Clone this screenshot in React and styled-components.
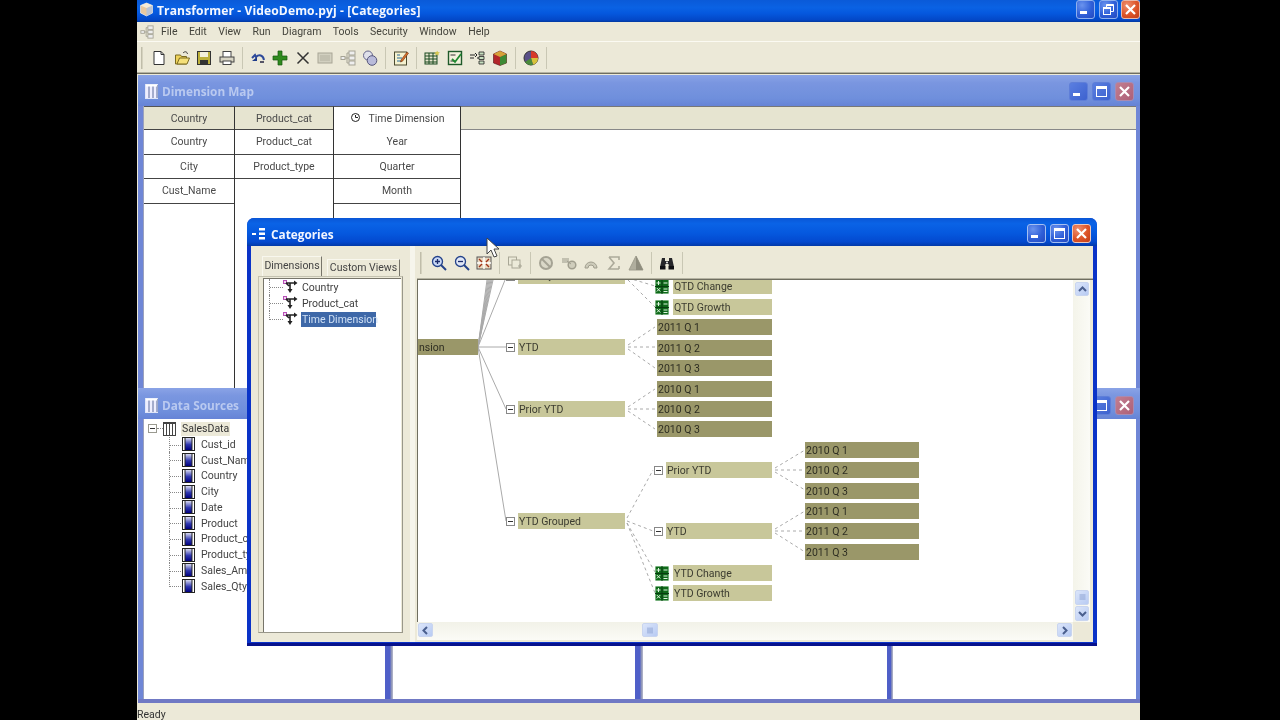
import React from "react";
import styled, { createGlobalStyle } from "styled-components";

const Global = createGlobalStyle`
  html, body { margin: 0; padding: 0; background: #000; width: 1280px; height: 720px; overflow: hidden; }
  #root { width: 1280px; height: 720px; }
  * { box-sizing: border-box; }
`;

const UI = `Roboto, "Liberation Sans", Arial, sans-serif`;
const TITLE = `"Open Sans", "Noto Sans", sans-serif`;

const Stage = styled.div`
  position: relative; width: 1280px; height: 720px; background: #000; padding-left: 137px;
  font-family: ${UI}; font-size: 10.5px; color: #333; filter: blur(0.35px);
`;
const AppWindow = styled.div`
  width: 1003px; height: 720px; display: flex; flex-direction: column; background: #ece9d8; overflow: hidden;
`;
const MainTitle = styled.div`
  height: 22px; flex: none; display: flex; align-items: center; padding: 0 0 3px 2px; gap: 3px;
  background: linear-gradient(#0a5ad8 0, #0a62e4 35%, #0558de 60%, #0348c8 90%, #02389e 100%);
`;
const MainTitleText = styled.span`
  flex: 1; padding-top: 2px; font: 700 12.1px ${TITLE}; color: #f4f7ff; letter-spacing: 0.1px;
`;
const WinButtons = styled.div`
  display: flex; flex: none; gap: ${p => p.$gap ?? 3}px; height: 19px;
`;
const btnBg = {
  blue: "radial-gradient(circle at 30% 25%, #6a93ee, #2f5fd8 55%, #2449c0)",
  red: "radial-gradient(circle at 30% 25%, #ee9070, #dd5428 55%, #c03c18)",
  dim: "linear-gradient(135deg, #5a7ee0, #3d62cf)",
  dimRed: "linear-gradient(135deg, #c27e90, #ad6078)",
};
const WinBtn = styled.div`
  width: 19px; height: 19px; flex: none;
  border-radius: 3px; display: flex; align-items: center; justify-content: center;
  border: 1px solid ${p => p.$line ?? "#dbe6fb"};
  background: ${p => btnBg[p.$kind]};
`;
const Glyph = ({ name }) => (
  <svg width="13" height="13" viewBox="0 0 13 13" fill="none" stroke="#fff">
    {name === "min" && <rect x="1.5" y="8.5" width="6" height="2" fill="#fff" />}
    {name === "max" && <><rect x="1.5" y="1.5" width="10" height="10" strokeWidth="1" /><rect x="1.5" y="1.5" width="10" height="2" fill="#fff" /></>}
    {name === "restore" && <><rect x="1.5" y="4.5" width="7" height="7" /><path d="M4.5 4V1.5h7v7H9" /><path d="M1.5 5.2h7M4.5 2.2h7" strokeWidth="1.4" /></>}
    {name === "close" && <path d="M2 2l9 9M11 2l-9 9" strokeWidth="2.2" />}
  </svg>
);

const MenuBar = styled.div`
  height: 20px; flex: none; display: flex; align-items: center; padding-left: 3px; gap: 11.5px;
  border-bottom: 1px solid #fbfaf2; color: #44443c;
`;
const MenuIcon = styled.svg` flex: none; margin-right: -4.5px; `;
const Tool = styled.div`
  height: 32px; flex: none; display: flex; align-items: center; padding: 0 0 0 4px;
  border-bottom: 1px solid #6f6e60; background: #ece9d8; box-shadow: inset 0 -1px 0 #b5b3a2;
`;
const Grip = styled.span`
  width: 2px; height: 22px; flex: none; margin-right: ${p => p.$after}px;
  background: #d5d2bf; border-left: 1px solid #c0bdaa;
`;
const ToolIcon = styled.span`
  width: 22.5px; height: 22px; flex: none; display: flex; align-items: center; justify-content: center;
`;
const ToolSep = styled.span`
  width: 8.5px; height: 22px; flex: none; display: flex; justify-content: center;
  &::before { content: ""; width: 1px; height: 100%; background: #c9c7b4; }
`;

const I = ({ children, s = 16, o }) => <svg width={s} height={s} viewBox="0 0 16 16" opacity={o}>{children}</svg>;

const treeGlyph = <><path d="M1 8h4M5 8h2M7 3v10M7 3h2M7 8h2M7 13h2" stroke="#a5a395" fill="none" /><rect x="1" y="6.5" width="4" height="3" fill="#eee" stroke="#a5a395" /><rect x="9" y="1" width="6" height="4" fill="#eee" stroke="#a5a395" /><rect x="9" y="6" width="6" height="4" fill="#eee" stroke="#a5a395" /><rect x="9" y="11" width="6" height="4" fill="#eee" stroke="#a5a395" /></>;

const icons = {
  newDoc: <I><path d="M3 1.5h7l3 3v10H3z" fill="#fff" stroke="#333" /><path d="M10 1.5v3h3" fill="none" stroke="#333" /></I>,
  open: <I><path d="M1.5 5h5l1 1.5h5v7.5h-11z" fill="#eed25a" stroke="#7a6a20" /><path d="M3 14l2.5-6h10l-2.5 6z" fill="#f5e07a" stroke="#7a6a20" /><path d="M9 3c2-2 4-1.5 4.5 1" fill="none" stroke="#333" /></I>,
  save: <I><rect x="1.5" y="1.5" width="13" height="13" fill="#bcb03a" stroke="#333" /><rect x="4" y="2" width="8" height="5" fill="#f3f0da" /><rect x="4" y="10" width="8" height="4.5" fill="#333" /></I>,
  print: <I><rect x="4" y="1.5" width="8" height="6" fill="#fff" stroke="#444" /><rect x="1" y="7" width="14" height="5" fill="#d8d5c4" stroke="#444" /><rect x="4" y="11" width="8" height="3.5" fill="#fff" stroke="#444" /></I>,
  undo: <I><path d="M2 8l3-3 1 2c3-3 7-2 8 3" fill="none" stroke="#2e4a9a" strokeWidth="2" /><path d="M2 11h5V7z" fill="#1d3a8a" /><path d="M10 11h4v2h-4z" fill="#556" /></I>,
  plus: <I><path d="M6 1h4v5h5v4h-5v5H6v-5H1V6h5z" fill="#2f8a1e" stroke="#14560e" strokeWidth=".7" /></I>,
  cross: <I><path d="M2.5 2.5l11 11M13.5 2.5l-11 11" stroke="#333" strokeWidth="1.5" /></I>,
  greyBox: <I><rect x="1" y="3" width="14" height="10" fill="#d2d0c0" stroke="#a8a696" /><path d="M3 6h10M3 8h10M3 10h10" stroke="#b2b0a0" /></I>,
  tree: <I>{treeGlyph}</I>,
  circles: <I><circle cx="6" cy="5.5" r="4.5" fill="#dfe0ea" stroke="#65658a" /><circle cx="10" cy="10.5" r="4.8" fill="#b9bbda" stroke="#55557a" /></I>,
  edit: <I><rect x="1.5" y="2" width="12" height="13" fill="#f5f2d0" stroke="#4a4a30" /><path d="M4 5h3M4 8h5M4 11h5" stroke="#2a6a9a" /><path d="M8 10l6-8 1.5 1.2-6 8L7.5 12z" fill="#d8702a" stroke="#6a3010" strokeWidth=".6" /></I>,
  grid: <I><rect x="1" y="3" width="12" height="11" fill="#e8e6d0" stroke="#1a4a20" /><path d="M1 6h12M1 9h12M1 12h12M5 3v11M9 3v11" stroke="#1a4a20" /><path d="M11 1l1 1.5 2 .5-1.5 1 .2 2-1.7-1-1.7 1 .2-2L8.5 3l2-.5z" fill="#d6c850" transform="translate(2 -.5)" /></I>,
  check: <I><rect x="1.5" y="1.5" width="13" height="13" fill="#f3f1de" stroke="#1e5a2a" strokeWidth="1.4" /><path d="M3.5 5h5M3.5 11h5" stroke="#333" /><path d="M5 9l3 3 6-8" fill="none" stroke="#1f8a30" strokeWidth="1.8" /></I>,
  tree2: <I><path d="M1 5h5M1 8h4M6 3l2 2-2 2M8 8h2" stroke="#222" fill="none" /><path d="M10 2h5v3h-5zM10 6.5h5v3h-5zM10 11h5v3h-5z" fill="#c8e0c0" stroke="#222" strokeWidth=".8" /></I>,
  cube: <I><path d="M8 1l6.5 3v9L8 15.5 1.5 13V4z" fill="#b3262a" stroke="#501015" strokeWidth=".6" /><path d="M8 7v8.5L14.5 13V4z" fill="#3d8a35" /><path d="M8 1l6.5 3L8 7 1.5 4z" fill="#d7a33a" /></I>,
  pie: <I><circle cx="8" cy="8" r="7" fill="#5a5088" stroke="#333" /><path d="M8 8V1a7 7 0 0 1 7 7z" fill="#d73a2a" /><path d="M8 8h7a7 7 0 0 1-5 6.7z" fill="#d8c23a" /><path d="M8 8l2 6.7A7 7 0 0 1 2 12z" fill="#4a8a3a" /></I>,
  zoomIn: <I><circle cx="6.5" cy="6.5" r="5" fill="#c9d8f5" stroke="#24428a" strokeWidth="1.3" /><path d="M4 6.5h5M6.5 4v5" stroke="#1a2a6a" strokeWidth="1.3" /><path d="M10 10l5 5" stroke="#24428a" strokeWidth="2" /></I>,
  zoomOut: <I><circle cx="6.5" cy="6.5" r="5" fill="#dfe6f5" stroke="#24428a" strokeWidth="1.3" /><path d="M4 6.5h5" stroke="#1a2a6a" strokeWidth="1.3" /><path d="M10 10l5 5" stroke="#24428a" strokeWidth="2" /></I>,
  fit: <I><rect x="1" y="2" width="14" height="12" fill="#e9d9c0" stroke="#555" /><path d="M1 8h14M8 2v12" stroke="#fff" strokeWidth="1.4" /><path d="M3 4l3 3M13 4l-3 3M3 12l3-3M13 12l-3-3" stroke="#a03018" strokeWidth="1.4" /></I>,
  copies: <I><rect x="1.5" y="2" width="8" height="8" fill="#ecead9" stroke="#a9a796" /><rect x="5" y="5" width="8" height="8" fill="#ecead9" stroke="#a9a796" /><path d="M11 11h4M13 9v4" stroke="#a9a796" /></I>,
  ban: <I><circle cx="8" cy="8" r="6" fill="#dad8c8" stroke="#a5a394" strokeWidth="2" /><path d="M4 4l8 8" stroke="#a5a394" strokeWidth="2" /></I>,
  link: <I><rect x="1" y="3" width="7" height="5" fill="#c2c0b0" /><circle cx="11" cy="10" r="3.8" fill="#cfcdbc" stroke="#a09e8e" strokeWidth="1.5" /><path d="M6 6l4 3" stroke="#a09e8e" /></I>,
  arc: <I><path d="M2 13a6 6 0 0 1 12 0h-3a3 3 0 0 0-6 0z" fill="#cdcbba" stroke="#a09e8e" /></I>,
  sigma: <I><path d="M3 2h10v3M13 14H3l5-6-5-6M13 11v3" fill="none" stroke="#acaa9a" strokeWidth="1.6" /></I>,
  tri: <I><path d="M8 1l7 14H1z" fill="#b0ae9e" stroke="#a09e8e" /><path d="M8 1l7 14H8z" fill="#8f8d7e" /></I>,
  bino: <I><path d="M3 3h3v3h4V3h3l2 9h-5l-.5-3h-3L6 12H1z" fill="#26262a" /><rect x="1" y="11" width="5.5" height="3.5" fill="#101014" /><rect x="9.5" y="11" width="5.5" height="3.5" fill="#101014" /><circle cx="8" cy="7.5" r="1" fill="#eee" /></I>,
};

const mdiBlue = "#6f86d6";
const MdiArea = styled.div`
  flex: 1; display: flex; flex-direction: column; padding-top: 1px; min-height: 0; background: #ece9d8;
`;
const MdiWindow = styled.section`
  height: ${p => p.$h}px; margin-left: 1px; flex: none; display: flex; flex-direction: column;
  background: ${mdiBlue}; border-radius: 5px 5px 0 0;
`;
const MdiTitle = styled.header`
  height: 31px; flex: none; display: flex; align-items: center; padding: ${p => p.$top}px 6px 0 7px; gap: 4px;
  background: linear-gradient(#8aa3e6, #7a96e0 25%, #6f8fdc 75%, #6683d6);
`;
const MdiName = styled.span`
  flex: 1; font: 700 11.8px ${TITLE}; color: #b9c9f0;
`;
const ColsIcon = () => (
  <svg width="13" height="15" viewBox="0 0 13 15"><rect x=".5" y=".5" width="12" height="14" fill="#eef" stroke="#dfe5f7" /><path d="M4 1v13M8 1v13M12 1v13" stroke="#5a6a9a" /><path d="M1 1.5h11" stroke="#fff" strokeWidth="2" /></svg>
);
const FramedBody = styled.div`
  flex: 1; min-height: 0; margin: 0 4px 0 5px; display: flex; background: #fff;
  border-left: 1px solid #9ba1bd;
`;
const Column = styled.div`
  width: ${p => p.$w}px; flex: none; display: flex; flex-direction: column;
  border-right: 1px solid #333; border-top: 1px solid #555;
`;
const RestColumn = styled.div`
  flex: 1; border-top: 1px solid #777;
`;
const HeadFill = styled.div` height: 23px; background: #e6e4d0; border-bottom: 1px solid #888; `;
const Cell = styled.div`
  height: ${p => (p.$head ? 23 : 24.5)}px; flex: none; display: flex; align-items: center; justify-content: center; gap: 8px;
  padding-top: ${p => (p.$head ? 1 : 0)}px; white-space: nowrap;
  color: #4a4a4a; background: ${p => (p.$shade ? "#e6e4d0" : "#fff")};
  border-bottom: 1px solid ${p => (p.$none ? "transparent" : "#444")};
`;
const ClockSvg = styled.svg` margin-top: -2px; flex: none; `;
const Clock = () => (
  <ClockSvg width="11" height="11" viewBox="0 0 11 11" fill="none" stroke="#222"><circle cx="5.5" cy="5.5" r="4" /><path d="M5.5 3v2.5h2.5" /></ClockSvg>
);
const Pane = styled.div`
  flex: ${p => (p.$w ? `0 0 ${p.$w}px` : 1)}; background: #fff; padding: 1.5px 0 0 4px; overflow: hidden;
`;
const Splitter = styled.div`
  width: ${p => p.$w ?? 8}px; flex: none; background: linear-gradient(90deg, #4f5fc8 60%, #8e95b8 80%, #b8bacb);
`;
const FrameBottom = styled.div` height: 4px; flex: none; background: #7079c4; `;
const TreeRoot = styled.div` display: flex; align-items: center; height: 16px; `;
const Expander = styled.span`
  width: 9px; height: 9px; flex: none; display: block; position: relative; background: #fff; border: 1px solid #9a9a90;
  &::after { content: ""; position: absolute; left: 1px; right: 1px; top: 3px; height: 1px; background: #333; }
`;
const DotLink = styled.span` width: 6px; flex: none; border-top: 1px dotted #888; `;
const RootLabel = styled.span`
  margin-left: 5px; padding: 0 1px; line-height: 14px; width: 49px; background: #ece9d8; color: #333;
`;
const ChildList = styled.div`
  margin-left: 21px; display: flex; flex-direction: column;
`;
const dots = "repeating-linear-gradient(90deg, #888 0 1px, transparent 1px 2px)";
const ChildRow = styled.div`
  display: flex; align-items: center; height: 15.75px; white-space: nowrap; color: #444;
  &::before {
    content: ""; width: 12px; height: ${p => (p.$last ? 8.5 : 15.75)}px; flex: none; align-self: flex-start;
    border-left: 1px dotted #888;
    background: ${dots} 0 8px / 100% 1px no-repeat;
  }
`;
const ChildText = styled.span` margin-left: 6px; `;
const FieldIcon = () => (
  <svg width="13" height="14" viewBox="0 0 13 14">
    <defs><linearGradient id="fg" x1="0" y1="0" x2="0" y2="1"><stop offset="0" stopColor="#d8daf0" /><stop offset=".55" stopColor="#3038b0" /><stop offset="1" stopColor="#000080" /></linearGradient></defs>
    <rect x=".5" y=".5" width="12" height="13" fill="#fff" stroke="#222" /><rect x="3" y="1" width="7" height="12" fill="url(#fg)" /><path d="M3 1v12M10 1v12" stroke="#222" />
  </svg>
);
const TableIcon = () => (
  <svg width="13" height="14" viewBox="0 0 13 14" fill="#fff" stroke="#444"><rect x=".5" y=".5" width="12" height="13" /><path d="M3.5 1v12M6.5 1v12M9.5 1v12" /><path d="M1 1.5h11" /></svg>
);

const Cat = styled.section`
  position: absolute; left: 247px; top: 218px; width: 850px; height: 428px; display: flex; flex-direction: column;
  border-radius: 7px 7px 0 0; background: #0a33c8;
  box-shadow: inset 0 -3px 0 #07128c;
`;
const CatTitle = styled.header`
  height: 28px; flex: none; display: flex; align-items: center; padding: 3px 6px 0 5px; gap: 4px; border-radius: 7px 7px 0 0;
  background: linear-gradient(#0a56d6 0, #0a63e6 20%, #0558de 55%, #0349cf 85%, #023aa8 100%);
`;
const CatName = styled.span` flex: 1; font: 700 11.8px ${TITLE}; color: #f2f6ff; `;
const CatBody = styled.div`
  flex: 1; min-height: 0; margin: 0 4px 4px; display: flex; background: #ece9d8;
`;
const LeftPane = styled.div`
  width: 154px; flex: none; padding: 10px 2px 9px 7px; display: flex; flex-direction: column;
`;
const TabRow = styled.div` display: flex; height: 20px; flex: none; align-items: flex-end; padding-left: 4px; gap: 5px; `;
const Tab = styled.div`
  width: ${p => p.$w}px; height: ${p => p.$h}px; display: flex; align-items: center; justify-content: center; color: #444;
  padding-bottom: 2px; white-space: nowrap;
  border-right: 1px solid #77756a; border-left: 1px solid #f8f7ee; border-top: 1px solid #f8f7ee;
`;
const TabPanel = styled.div`
  flex: 1; padding: 1px 1px 0 4px; border: 1px solid #99978a; border-top-color: #c4c2b0; border-left-color: #c4c2b0; background: #ece9d8; display: flex;
`;
const TabInner = styled.div` flex: 1; background: #fff; padding-left: 5px; border-top: 1px solid #77756a; border-left: 1px solid #77756a; `;
const DimRow = styled.div`
  height: 16px; display: flex; align-items: center; color: #3f3f3f; white-space: nowrap;
  &::before {
    content: ""; width: 13px; height: ${p => (p.$last ? 8.5 : 16)}px; flex: none; align-self: flex-start;
    border-left: 1px dotted #888;
    background: ${dots} 0 8px / 100% 1px no-repeat;
  }
`;
const DimLabel = styled.span`
  margin-left: 3px; padding: 0 1px; line-height: 15px; ${p => p.$sel ? "background:#3e68a8;color:#cfe0f5;width:75px;" : ""}
`;
const DimSvg = styled.svg` flex: none; `;
const DimIcon = () => (
  <DimSvg width="15" height="14" viewBox="0 0 15 14">
    <rect x="0" y="0" width="4" height="4" fill="#b850b8" /><rect x="1" y="1" width="2" height="2" fill="#eed8ee" />
    <path d="M3 3h9M7 3v6M3 3l3 3" stroke="#222" strokeWidth="1.6" fill="none" /><path d="M11 .5L14.5 3 11 5.5zM4.5 9h5L7 13z" fill="#222" />
  </DimSvg>
);
const Sash = styled.div` width: 12px; flex: none; padding-left: 5px; background: #ece9d8; &::before { content:""; display:block; width:5px; height:100%; background:#f6f5ec; } `;
const RightPane = styled.div` flex: 1; min-width: 0; display: flex; flex-direction: column; padding-right: 2px; `;
const CatTools = styled.div`
  height: 34px; margin-right: -2px; flex: none; display: flex; align-items: center; padding: 1px 0 1px 3px;
  border-bottom: 1px solid #6f6e60; box-shadow: inset 0 -1px 0 #b5b3a2;
`;
const CanvasRow = styled.div` flex: 1; min-height: 0; display: flex; `;
const Canvas = styled.div`
  position: relative; width: 656px; overflow: hidden; background: #fff;
  border-left: 1px solid #6f6e60; color: #3a3a30;
`;
const Lines = styled.svg` position: absolute; left: -1px; top: 0; `;
const Node = styled.div`
  position: absolute; left: ${p => p.$x - 418}px; top: ${p => p.$y - 280}px; display: flex; align-items: center; height: 16px;
`;
const Bar = styled.div`
  width: ${p => p.$w}px; height: 16px; flex: none; display: flex; align-items: center; padding-left: 1px; white-space: nowrap; overflow: hidden;
  background: ${p => (p.$dark ? "#9a9769" : "#c8c79a")}; color: ${p => (p.$dark ? "#2e2e22" : "#3c3c30")};
`;
const NodeBox = styled(Expander)` margin-right: 3px; border-color: #888; `;
const CalcIcon = styled.span` display: flex; margin-right: 4px; `;
const Calc = () => (
  <svg width="14" height="15" viewBox="0 0 14 15" fill="none" stroke="#dff5df"><rect width="14" height="15" fill="#0f6a1a" /><path d="M0 7.5h14M7 0v15" stroke="#083c10" /><path d="M1.5 4h4M3.5 2v4M8.5 4h4M1.8 9l3.5 3.5M5.3 9l-3.5 3.5M8.5 10h4M8.5 12.5h4" /></svg>
);
const VScroll = styled.div`
  width: 17px; flex: none; display: flex; flex-direction: column; padding: 2px 2px 1px; background: linear-gradient(90deg,#f4f4ea,#fbfbf6);
`;
const ScrollSpacer = styled.div` flex: ${p => (p.$w ? `0 0 ${p.$w}px` : 1)}; `;
const ScrollBtn = styled.div`
  width: ${p => p.$w ?? 14}px; height: ${p => p.$h ?? 14}px; flex: none; border-radius: 2px; display: flex; align-items: center; justify-content: center;
  margin-bottom: ${p => p.$mb ?? 0}px;
  background: linear-gradient(135deg,#dbe5fa,#b8cbf3); border: 1px solid #c9d5ef;
`;
const HRow = styled.div` height: 20px; flex: none; display: flex; background: #ece9d8; `;
const HScroll = styled.div`
  width: 656px; flex: none; height: 18px; display: flex; align-items: center; padding: 0 1px 2px 1px; background: linear-gradient(#f2f2e8,#fbfbf6);
`;
const Chev = ({ d }) => (
  <svg width="9" height="9" viewBox="0 0 9 9" fill="none" stroke="#4a5f8e" strokeWidth="2">
    <path d={{ u: "M1 6l3.5-3.5L8 6", d: "M1 3l3.5 3.5L8 3", l: "M6 1L2.5 4.5 6 8", r: "M3 1l3.5 3.5L3 8" }[d]} />
  </svg>
);
const Thumb = () => (
  <svg width="7" height="7" viewBox="0 0 7 7" stroke="#8ea3d2"><path d="M.5 1h6M.5 3h6M.5 5h6" /></svg>
);
const ThumbV = () => (
  <svg width="7" height="7" viewBox="0 0 7 7" stroke="#8ea3d2"><path d="M1 .5v6M3 .5v6M5 .5v6" /></svg>
);
const StatusBar = styled.div`
  height: 17px; flex: none; display: flex; align-items: center; padding: 5px 0 0 0; color: #333;
`;
const Cursor = styled.svg` position: absolute; left: 486px; top: 237px; `;

const TopIcons = [["newDoc", "open", "save", "print"], ["undo", "plus", "cross", "greyBox", "tree", "circles"], ["edit"], ["grid", "check", "tree2", "cube"], ["pie"]];
const CatIcons = [["zoomIn", "zoomOut", "fit"], ["copies"], ["ban", "link", "arc", "sigma", "tri"], ["bino"]];

const fields = ["Cust_id", "Cust_Name", "Country", "City", "Date", "Product", "Product_cat", "Product_type", "Sales_Amt", "Sales_Qty"];

const dark = [
  ["2011 Q 1", 657, 319, 115], ["2011 Q 2", 657, 340, 115], ["2011 Q 3", 657, 360, 115],
  ["2010 Q 1", 657, 381, 115], ["2010 Q 2", 657, 401, 115], ["2010 Q 3", 657, 421, 115],
  ["2010 Q 1", 805, 442, 114], ["2010 Q 2", 805, 462, 114], ["2010 Q 3", 805, 483, 114],
  ["2011 Q 1", 805, 503, 114], ["2011 Q 2", 805, 523, 114], ["2011 Q 3", 805, 544, 114],
];
const branches = [
  ["Prior QTD", 506, 268, 107], ["YTD", 506, 339, 107], ["Prior YTD", 506, 401, 107], ["YTD Grouped", 506, 513, 107],
  ["Prior YTD", 654, 462, 106], ["YTD", 654, 523, 106],
];
const calcs = [["QTD Change", 278], ["QTD Growth", 299], ["YTD Change", 565], ["YTD Growth", 585]];
const dashed = [
  [628, 278, 655, 286], [628, 280, 655, 307],
  [628, 345, 655, 327], [628, 347, 655, 347], [628, 349, 655, 368],
  [628, 407, 655, 389], [628, 409, 655, 409], [628, 411, 655, 429],
  [775, 468, 805, 450], [775, 470, 805, 470], [775, 472, 805, 490],
  [775, 529, 805, 511], [775, 531, 805, 531], [775, 533, 805, 552],
  [627, 518, 653, 470], [627, 521, 653, 531], [627, 523, 655, 572], [627, 523, 655, 593],
];
const solid = [[506, 347], [506, 409], [506, 521], [487, 280], [488, 280], [489, 280], [490, 280], [491, 280], [492, 280], [493, 280], [505, 280]];

const Toolset = ({ groups }) => groups.map((g, i) => (
  <React.Fragment key={i}>
    {g.map(n => <ToolIcon key={n}>{icons[n]}</ToolIcon>)}
    <ToolSep />
  </React.Fragment>
));

const InactiveButtons = () => (
  <WinButtons $gap={4}>
    <WinBtn $kind="dim" $line="#5e7ed8"><Glyph name="min" /></WinBtn>
    <WinBtn $kind="dim" $line="#5e7ed8"><Glyph name="max" /></WinBtn>
    <WinBtn $kind="dimRed" $line="#a98ab0"><Glyph name="close" /></WinBtn>
  </WinButtons>
);

export default function App() {
  return (
    <Stage>
      <Global />
      <AppWindow>
        <MainTitle>
          <svg width="15" height="15" viewBox="0 0 15 15"><path d="M7.5 1l6 2.5v7.5l-6 3-6-3V3.5z" fill="#e9c9a0" stroke="#fff" strokeWidth=".6" /><path d="M7.5 6v8l6-3V3.5z" fill="#b8c4d8" /><path d="M7.5 1l6 2.5-6 2.5-6-2.5z" fill="#f6ecd8" /></svg>
          <MainTitleText>Transformer - VideoDemo.pyj - [Categories]</MainTitleText>
          <WinButtons $gap={3.5}>
            <WinBtn $kind="blue" $line="#8fb0ee"><Glyph name="min" /></WinBtn>
            <WinBtn $kind="blue" $line="#8fb0ee"><Glyph name="restore" /></WinBtn>
            <WinBtn $kind="red" $line="#e8b8a8"><Glyph name="close" /></WinBtn>
          </WinButtons>
        </MainTitle>
        <MenuBar>
          <MenuIcon width="14" height="14" viewBox="0 0 16 16">{treeGlyph}</MenuIcon>
          <span>File</span><span>Edit</span><span>View</span><span>Run</span><span>Diagram</span><span>Tools</span><span>Security</span><span>Window</span><span>Help</span>
        </MenuBar>
        <Tool>
          <Grip $after={5} />
          <Toolset groups={TopIcons} />
        </Tool>
        <MdiArea>
          <MdiWindow $h={313}>
            <MdiTitle $top={1}>
              <ColsIcon />
              <MdiName>Dimension Map</MdiName>
              <InactiveButtons />
            </MdiTitle>
            <FramedBody>
              <Column $w={91}>
                <Cell $head $shade>Country</Cell><Cell>Country</Cell><Cell>City</Cell><Cell>Cust_Name</Cell>
              </Column>
              <Column $w={99}>
                <Cell $head $shade>Product_cat</Cell><Cell>Product_cat</Cell><Cell>Product_type</Cell>
              </Column>
              <Column $w={127}>
                <Cell $head $none><Clock />Time Dimension</Cell><Cell>Year</Cell><Cell>Quarter</Cell><Cell>Month</Cell>
              </Column>
              <RestColumn><HeadFill /></RestColumn>
            </FramedBody>
          </MdiWindow>
          <MdiWindow $h={315}>
            <MdiTitle $top={3}>
              <ColsIcon />
              <MdiName>Data Sources</MdiName>
              <InactiveButtons />
            </MdiTitle>
            <FramedBody>
              <Pane $w={241}>
                <TreeRoot>
                  <Expander /><DotLink /><TableIcon /><RootLabel>SalesData</RootLabel>
                </TreeRoot>
                <ChildList>
                  {fields.map((f, i) => (
                    <ChildRow key={f} $last={i === fields.length - 1}><FieldIcon /><ChildText>{f}</ChildText></ChildRow>
                  ))}
                </ChildList>
              </Pane>
              <Splitter />
              <Pane $w={242} />
              <Splitter />
              <Pane $w={244} />
              <Splitter $w={6} />
              <Pane />
            </FramedBody>
            <FrameBottom />
          </MdiWindow>
        </MdiArea>
        <StatusBar>Ready</StatusBar>
      </AppWindow>

      <Cat>
        <CatTitle>
          <svg width="15" height="14" viewBox="0 0 15 14" fill="#fff"><rect x="0" y="6" width="4" height="2" /><rect x="7" y="1" width="6" height="2.5" /><rect x="7" y="5.5" width="6" height="2.5" /><rect x="7" y="10" width="6" height="2.5" /></svg>
          <CatName>Categories</CatName>
          <WinButtons $gap={3.5}>
            <WinBtn $kind="blue" $line="#a5c0f2"><Glyph name="min" /></WinBtn>
            <WinBtn $kind="blue" $line="#a5c0f2"><Glyph name="max" /></WinBtn>
            <WinBtn $kind="red" $line="#f0c8b8"><Glyph name="close" /></WinBtn>
          </WinButtons>
        </CatTitle>
        <CatBody>
          <LeftPane>
            <TabRow>
              <Tab $w={60} $h={20}>Dimensions</Tab>
              <Tab $w={73} $h={17}>Custom Views</Tab>
            </TabRow>
            <TabPanel>
              <TabInner>
                <DimRow><DimIcon /><DimLabel>Country</DimLabel></DimRow>
                <DimRow><DimIcon /><DimLabel>Product_cat</DimLabel></DimRow>
                <DimRow $last><DimIcon /><DimLabel $sel>Time Dimension</DimLabel></DimRow>
              </TabInner>
            </TabPanel>
          </LeftPane>
          <Sash />
          <RightPane>
            <CatTools>
              <Grip $after={6} />
              <Toolset groups={CatIcons} />
            </CatTools>
            <CanvasRow>
              <Canvas>
                <Lines width="657" height="342" viewBox="417 280 657 342" fill="none">
                  {solid.map(([x, y], i) => <line key={i} x1="478" y1="347" x2={x} y2={y} stroke="#aaa" />)}
                  {dashed.map(([a, b, c, d], i) => <line key={i} x1={a} y1={b} x2={c} y2={d} stroke="#aaa" strokeDasharray="3 3" />)}
                </Lines>
                <Node $x={418} $y={339}><Bar $dark $w={60}>nsion</Bar></Node>
                {branches.map(([t, x, y, w]) => (
                  <Node key={t + x + y} $x={x} $y={y}><NodeBox /><Bar $w={w}>{t}</Bar></Node>
                ))}
                {dark.map(([t, x, y, w]) => (
                  <Node key={t + x + y} $x={x} $y={y}><Bar $dark $w={w}>{t}</Bar></Node>
                ))}
                {calcs.map(([t, y]) => (
                  <Node key={t} $x={655} $y={y}><CalcIcon><Calc /></CalcIcon><Bar $w={99}>{t}</Bar></Node>
                ))}
              </Canvas>
              <VScroll>
                <ScrollBtn><Chev d="u" /></ScrollBtn>
                <ScrollSpacer />
                <ScrollBtn $h={15} $mb={1}><Thumb /></ScrollBtn>
                <ScrollBtn $h={15}><Chev d="d" /></ScrollBtn>
              </VScroll>
            </CanvasRow>
            <HRow>
              <HScroll>
                <ScrollBtn $w={15}><Chev d="l" /></ScrollBtn>
                <ScrollSpacer $w={209} />
                <ScrollBtn $w={16}><ThumbV /></ScrollBtn>
                <ScrollSpacer />
                <ScrollBtn $w={15}><Chev d="r" /></ScrollBtn>
              </HScroll>
            </HRow>
          </RightPane>
        </CatBody>
      </Cat>

      <Cursor width="13" height="21" viewBox="0 0 13 21">
        <path d="M1 1v16l4-4 3 7 3-1-3-7h5z" fill="#fff" stroke="#444" strokeWidth="1" />
      </Cursor>
    </Stage>
  );
}
